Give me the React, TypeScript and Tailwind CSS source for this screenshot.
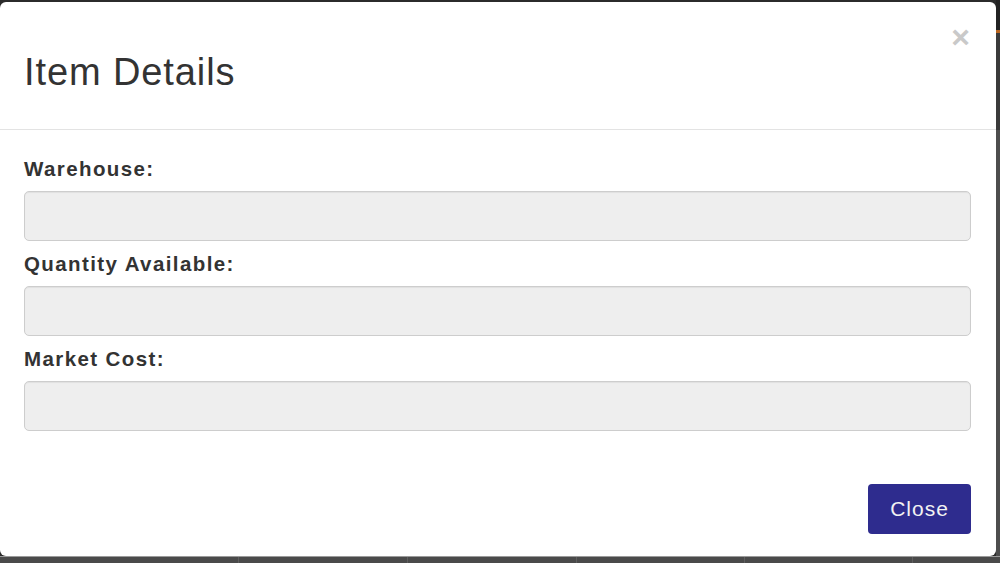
import React from 'react';

const fields = ['Warehouse:', 'Quantity Available:', 'Market Cost:'];

const cells = [239, 169, 169, 168, 168];

export default function App() {
  return (
    <div className="w-[1000px] h-[563px] bg-[#4b4b4b] flex flex-col overflow-hidden font-['Liberation_Sans',Arial,sans-serif]">
      <div className="flex h-[556px]">
        <div className="w-[996px] bg-[#2b2b2b] pt-[2px]">
          <div className="relative h-[554px] bg-white rounded-[6px] flex flex-col">
            {/* header */}
            <div className="relative pt-[49px] pb-[36px] px-[24px] border-b border-[#e3e3e3]">
              <h4 className="text-[38px] leading-[42px] tracking-[0.9px] text-[#333333] font-normal">Item Details</h4>
              <button
                type="button"
                className="absolute top-[19px] right-[26px] text-[32px] leading-[32px] font-bold text-[#c9c9c9]"
              >
                ×
              </button>
            </div>

            {/* body */}
            <div className="px-[24px] pt-[27px] pr-[25px] flex flex-col gap-[11px]">
              {fields.map((label) => (
                <div key={label} className="flex flex-col">
                  <label className="text-[20.5px] leading-[24px] font-bold tracking-[1.4px] text-[#333333] mb-[10px]">
                    {label}
                  </label>
                  <input
                    readOnly
                    className="h-[50px] w-full bg-[#eeeeee] border border-[#cdcdcd] rounded-[5px] shadow-[inset_0_1px_1px_rgba(0,0,0,0.06)] outline-none"
                  />
                </div>
              ))}
            </div>

            {/* footer */}
            <div className="mt-auto flex justify-end pr-[25px] pb-[22px]">
              <button
                type="button"
                className="w-[103px] h-[50px] rounded-[4px] bg-[#2e2c8e] text-[#f2f2f2] text-[21px] tracking-[1px]"
              >
                Close
              </button>
            </div>
          </div>
        </div>
        <div className="flex-1 flex flex-col">
          <div className="h-[30px] bg-[#222222]" />
          <div className="h-[3px] bg-[#b8651f]" />
          <div className="h-[97px] bg-[#3a3a3a]" />
          <div className="flex-1 bg-[#4d4d4d]" />
        </div>
      </div>
      <div className="h-px bg-[#9a9a9a]" />
      <div className="flex flex-1">
        {cells.map((w, i) => (
          <div key={i} style={{ width: w }} className="border-r border-[#5e5e5e] bg-[#4a4a4a]" />
        ))}
        <div className="flex-1 bg-[#4a4a4a]" />
      </div>
    </div>
  );
}
